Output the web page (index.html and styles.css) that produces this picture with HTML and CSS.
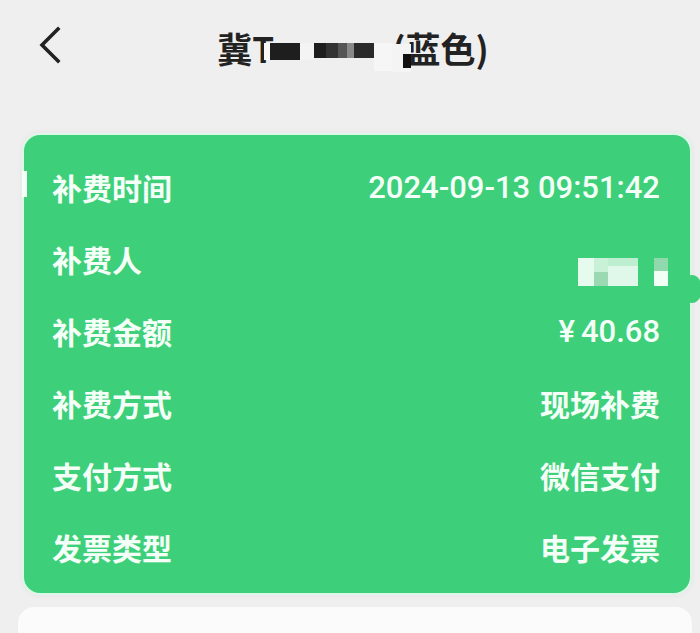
FILE: index.html
```html
<!DOCTYPE html>
<html lang="zh">
<head>
<meta charset="utf-8">
<link rel="stylesheet" href="styles.css">
</head>
<body>
<div class="page">
  <header class="header">
    <span class="back">
      <svg width="28" height="40" viewBox="0 0 28 40"><polyline points="22,4 6,20 22,36" fill="none" stroke="#222" stroke-width="3.6" stroke-linecap="square"/></svg>
    </span>
    <h1 class="title">冀T<span class="mask"><i class="m1"></i><i class="m2"></i><i class="m3"></i><i class="m4"></i></span><span class="paren">(<i class="pm"></i></span>蓝色)</h1>
  </header>
  <section class="card">
    <span class="tick"></span>
    <span class="bump"></span>
    <div class="row"><span class="label">补费时间</span><span class="value num">2024-09-13 09:51:42</span></div>
    <div class="row"><span class="label">补费人</span><span class="value blur"><i class="b1"></i><i class="b2"></i><i class="b3"></i><i class="b4"></i></span></div>
    <div class="row"><span class="label">补费金额</span><span class="value num"><span class="yen">¥</span>40.68</span></div>
    <div class="row"><span class="label">补费方式</span><span class="value">现场补费</span></div>
    <div class="row"><span class="label">支付方式</span><span class="value">微信支付</span></div>
    <div class="row"><span class="label">发票类型</span><span class="value">电子发票</span></div>
  </section>
  <section class="next"></section>
</div>
</body>
</html>
```
FILE: styles.css
```css
html, body {
  margin: 0;
  padding: 0;
  background: #efefef;
  font-family: "Noto Sans CJK SC", "Noto Sans", sans-serif;
}
.page {
  width: 700px;
  height: 633px;
  overflow: hidden;
  display: flex;
  flex-direction: column;
}
.page > * { flex-shrink: 0; }
.header {
  position: relative;
  height: 95px;
  display: flex;
  align-items: center;
  justify-content: center;
}
.back {
  position: absolute;
  left: 36px;
  top: 25px;
}
.title {
  margin: 0 0 0 6px;
  font-size: 35px;
  font-weight: 700;
  color: #222;
  display: flex;
  align-items: center;
}
.mask {
  display: inline-flex;
  align-items: flex-start;
  height: 34px;
  margin: 0 0 0 -4px;
}
.mask i { display: block; }
.mask .m1 { width: 30px; height: 17px; background: #1e1e1e; margin-top: 12px; box-shadow: -6px 0 0 #f7f7f7; }
.mask .m2 { width: 14px; height: 17px; background: #f4f4f4; margin-top: 12px; }
.mask .m3 { width: 60px; height: 15px; margin-top: 12px; background: linear-gradient(90deg, #1e1e1e 0 20%, #333 20% 40%, #555 40% 55%, #888 55% 67%, #2a2a2a 67% 100%); }
.mask .m4 { width: 18px; height: 28px; background: #f6f6f6; margin-top: 12px; }
.paren {
  position: relative;
}
.paren .pm {
  position: absolute;
  left: 0;
  right: -6px;
  top: 22px;
  height: 28px;
  background: #f4f4f4;
}
.paren .pm::after {
  content: "";
  position: absolute;
  right: 0;
  top: 10px;
  width: 8px;
  height: 14px;
  background: #111;
}
.card {
  position: relative;
  margin: 38px 8px 0 22px;
  background: #3ecf7a;
  border: 2px solid #dcf8e7;
  border-radius: 18px;
  padding: 16px 30px 10px 28px;
  box-shadow: 0 0 6px rgba(0,0,0,0.05);
}
.tick {
  position: absolute;
  left: -2px;
  top: 36px;
  width: 5px;
  height: 26px;
  background: #f4fff8;
}
.bump {
  position: absolute;
  right: -12px;
  top: 140px;
  width: 20px;
  height: 28px;
  border-radius: 50%;
  background: #3ecf7a;
}
.row {
  height: 72px;
  display: flex;
  align-items: center;
  justify-content: space-between;
  color: #f4fff8;
  font-size: 30px;
  font-weight: 700;
}
.value.num {
  font-family: "Roboto", "Noto Sans", sans-serif;
  font-size: 31px;
  font-weight: 500;
}
.yen { margin-right: 6px; }
.blur {
  display: flex;
  align-items: flex-end;
  margin-top: 26px;
  margin-right: -8px;
}
.blur i { display: block; height: 28px; }
.blur .b1 { width: 16px; background: #e6fbee; }
.blur .b2 { width: 14px; background: linear-gradient(#c8f1d8 0 50%, #9ad9b1 50% 100%); }
.blur .b3 { width: 30px; background: linear-gradient(#bdeed0 0 30%, #e0f8ea 30% 100%); }
.blur .b4 { width: 14px; margin-left: 16px; background: linear-gradient(#8fd9ad 0 45%, #f2fff7 45% 100%); }
.next {
  margin: 12px 8px 0 18px;
  height: 40px;
  background: #fbfbfb;
  border-radius: 16px 16px 0 0;
}
```
